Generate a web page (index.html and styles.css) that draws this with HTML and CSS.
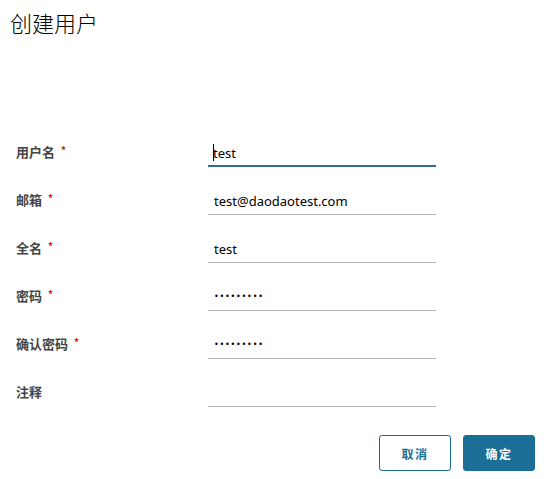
FILE: index.html
```html
<!DOCTYPE html>
<html lang="zh">
<head>
<meta charset="utf-8">
<link rel="stylesheet" href="styles.css">
</head>
<body>
<div class="modal">
  <h3 class="title">创建用户</h3>
  <form class="form">
    <div class="row">
      <label class="label">用户名<span class="req">*</span></label>
      <div class="field focus"><span class="caret"></span><span class="val">test</span></div>
    </div>
    <div class="row">
      <label class="label">邮箱<span class="req">*</span></label>
      <div class="field"><span class="val">test@daodaotest.com</span></div>
    </div>
    <div class="row">
      <label class="label">全名<span class="req">*</span></label>
      <div class="field"><span class="val">test</span></div>
    </div>
    <div class="row">
      <label class="label">密码<span class="req">*</span></label>
      <div class="field"><span class="dots">•••••••••</span></div>
    </div>
    <div class="row">
      <label class="label">确认密码<span class="req">*</span></label>
      <div class="field"><span class="dots">•••••••••</span></div>
    </div>
    <div class="row">
      <label class="label">注释</label>
      <div class="field"></div>
    </div>
  </form>
  <div class="footer">
    <button class="btn btn-outline" type="button">取消</button>
    <button class="btn btn-primary" type="button">确定</button>
  </div>
</div>
</body>
</html>
```
FILE: styles.css
```css
html, body {
  margin: 0;
  padding: 0;
  background: #fff;
}
body {
  width: 548px;
  height: 479px;
  overflow: hidden;
  font-family: "Noto Sans", "Noto Sans CJK SC", sans-serif;
  color: #333;
}
.modal {
  display: flex;
  flex-direction: column;
}
.title {
  margin: 0;
  padding: 6px 0 0 10px;
  font-family: "Noto Sans CJK SC", sans-serif;
  font-size: 22px;
  font-weight: 300;
  line-height: 32px;
  color: #000;
}
.form {
  display: flex;
  flex-direction: column;
  padding: 104px 0 0 16px;
}
.row {
  display: grid;
  grid-template-columns: 192px 228px;
  height: 48px;
}
.label {
  font-family: "Noto Sans CJK SC", sans-serif;
  font-size: 13px;
  font-weight: 700;
  line-height: 20px;
  padding-top: 0;
  color: #454545;
}
.req {
  color: #c92100;
  font-size: 10px;
  margin-left: 6px;
  position: relative;
  top: -3px;
}
.field {
  height: 25px;
  border-bottom: 1px solid #b3b3b3;
  box-sizing: border-box;
  padding: 2px 0 0 6px;
  display: flex;
  align-items: flex-start;
  font-size: 13px;
  line-height: 18px;
  color: #000;
}
.field.focus {
  border-bottom: 2px solid #2d6e8a;
}
.caret {
  display: inline-block;
  width: 1px;
  height: 17px;
  background: #000;
  margin-right: -1px;
  margin-left: -1px;
}
.dots {
  font-family: "DejaVu Sans", sans-serif;
  font-size: 8px;
  letter-spacing: 0.8px;
  line-height: 18px;
}
.footer {
  display: flex;
  justify-content: flex-end;
  gap: 12px;
  padding: 5px 13px 0 0;
}
.btn {
  width: 72px;
  height: 36px;
  box-sizing: border-box;
  border-radius: 3px;
  font-family: "Noto Sans CJK SC", sans-serif;
  font-size: 12px;
  font-weight: 700;
  letter-spacing: 0.12em;
  padding: 0;
}
.btn-outline {
  background: #fff;
  border: 1px solid #1b6f96;
  color: #1b6f96;
}
.btn-primary {
  background: #1b6f96;
  border: 1px solid #1b6f96;
  color: #fff;
}
```
